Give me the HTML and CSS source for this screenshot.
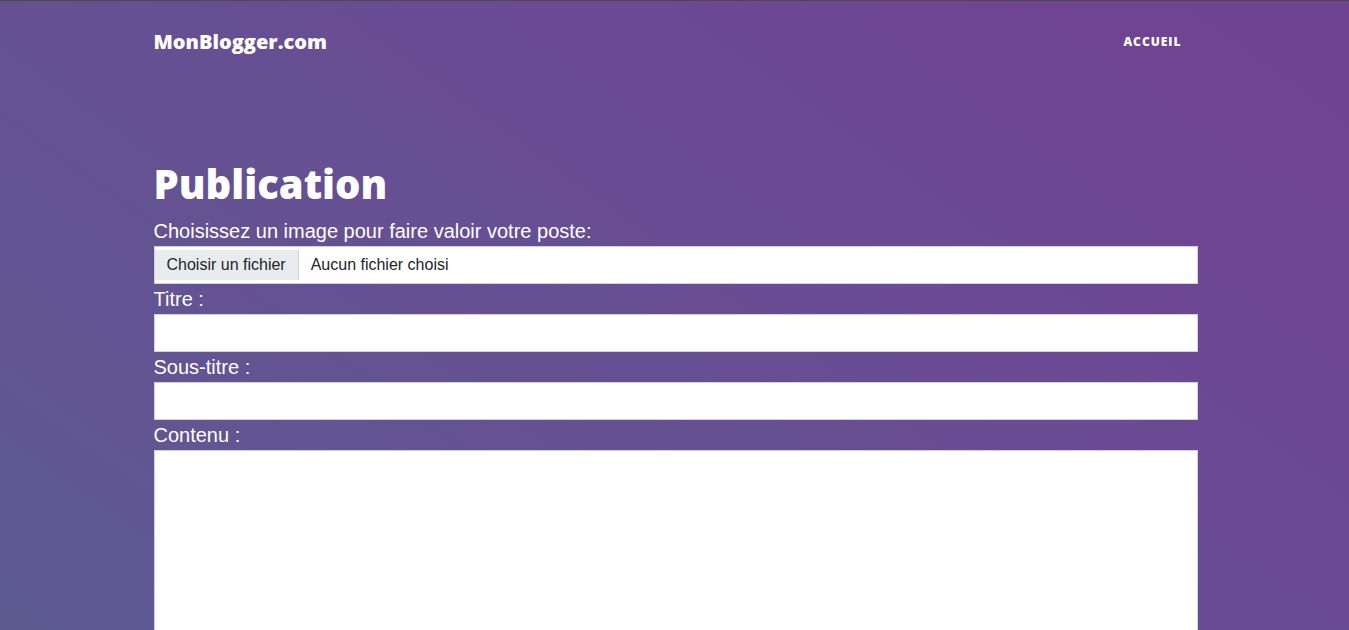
FILE: index.html
```html
<!DOCTYPE html>
<html lang="fr">
<head>
<meta charset="utf-8">
<meta name="viewport" content="width=device-width, initial-scale=1">
<title>MonBlogger.com – Publication</title>
<link rel="stylesheet" href="styles.css">
</head>
<body class="page">
<header class="container navbar">
  <a class="brand" href="#">MonBlogger.com</a>
  <nav><a class="nav-link" href="#">Accueil</a></nav>
</header>
<main class="container">
  <h1 class="title">Publication</h1>
  <form class="form">
    <label class="label" for="image">Choisissez un image pour faire valoir votre poste:</label>
    <label class="control file">
      <input class="file-input" type="file" id="image">
      <span class="file-button">Choisir un fichier</span>
      <span class="file-name">Aucun fichier choisi</span>
    </label>
    <label class="label" for="titre">Titre :</label>
    <input class="control" type="text" id="titre">
    <label class="label" for="sous-titre">Sous-titre :</label>
    <input class="control" type="text" id="sous-titre">
    <label class="label" for="contenu">Contenu :</label>
    <textarea class="control content" id="contenu" rows="15"></textarea>
  </form>
</main>
</body>
</html>
```
FILE: styles.css
```css
* {
  box-sizing: border-box;
}

.page {
  margin: 0;
  border-top: 1px solid #4a4a4a;
  font-family: "Liberation Sans", Arial, sans-serif;
  font-size: 20px;
  line-height: 30px;
  color: #fff;
  background: linear-gradient(36deg, #5d5a92 0%, #655192 39%, #6a4b94 62%, #6e4593 80%, #6e4392 100%) fixed;
}

.container {
  width: calc(100% - 32px);
  max-width: 1046px;
  margin: 0 auto;
  padding-left: 2px;
}

.navbar {
  display: flex;
  justify-content: space-between;
  align-items: center;
  padding-top: 26px;
}

.brand,
.nav-link {
  font-family: "Open Sans", sans-serif;
  font-weight: 800;
  color: #fff;
  text-decoration: none;
}

.nav-link {
  display: block;
  padding: 0 16px;
  font-size: 12px;
  letter-spacing: 1px;
  text-transform: uppercase;
}

.title {
  margin: 0;
  padding: 103px 0 8px;
  font-family: "Open Sans", sans-serif;
  font-size: 40px;
  font-weight: 800;
  line-height: 48px;
}

.form {
  display: flex;
  flex-direction: column;
}

.control {
  width: 100%;
  height: 38px;
  padding: 3px 12px;
  border: 1px solid #ced4da;
  border-radius: 0;
  font: 16px/24px "Liberation Sans", Arial, sans-serif;
  color: #212529;
  background: #fff;
}

.content {
  display: block;
  height: auto;
  resize: vertical;
}

.file {
  display: flex;
  align-items: center;
  position: relative;
  padding-left: 0;
  cursor: pointer;
}

.file-input {
  position: absolute;
  width: 1px;
  height: 1px;
  opacity: 0;
}

.file-button {
  padding: 3px 12px;
  margin-right: 12px;
  border-right: 1px solid #ced4da;
  background: #e9ecef;
}
```
